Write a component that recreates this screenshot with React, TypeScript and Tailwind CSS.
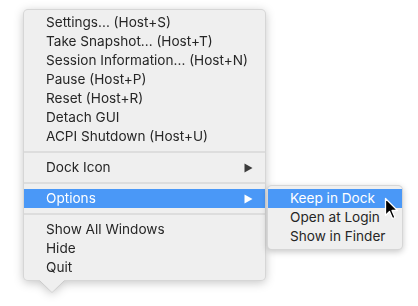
const topItems = [
  "Settings... (Host+S)",
  "Take Snapshot... (Host+T)",
  "Session Information... (Host+N)",
  "Pause (Host+P)",
  "Reset (Host+R)",
  "Detach GUI",
  "ACPI Shutdown (Host+U)",
];

const bottomItems = ["Show All Windows", "Hide", "Quit"];

const subItems = ["Keep in Dock", "Open at Login", "Show in Finder"];

function Arrow({ white }: { white?: boolean }) {
  return (
    <svg width="9" height="10" viewBox="0 0 9 10" className="mr-[12px]">
      <path d="M0.5 0.5 L8.5 5 L0.5 9.5 Z" fill={white ? "#ffffff" : "#3b3b3b"} />
    </svg>
  );
}

function Separator() {
  return (
    <div className="py-[5px]">
      <div className="h-[2px] bg-[#dddddd]" />
    </div>
  );
}

function Row({ label, active, arrow }: { label: string; active?: boolean; arrow?: boolean }) {
  return (
    <div
      className={
        active
          ? "flex h-[19px] items-center justify-between bg-[#4a98f7] pl-[22px] text-white"
          : "flex h-[19px] items-center justify-between pl-[22px] text-[#262626]"
      }
    >
      <span>{label}</span>
      {arrow && <Arrow white={active} />}
    </div>
  );
}

export default function App() {
  return (
    <div className="relative h-[306px] w-[418px] overflow-hidden bg-white text-[13.6px] leading-none font-['Inter','Liberation_Sans',sans-serif]">
      <div className="pl-[23px] pt-[9px]">
        <div className="relative w-[243px]">
          {/* main menu + tail */}
          <div className="relative drop-shadow-[0_2px_5px_rgba(0,0,0,0.22)]">
            <div className="rounded-[5px] border border-black/10 bg-[#efefef] py-[3px]">
              {topItems.map((t) => (
                <Row key={t} label={t} />
              ))}
              <Separator />
              <Row label="Dock Icon" arrow />
              <Separator />
              <Row label="Options" arrow active />
              <Separator />
              {bottomItems.map((t) => (
                <Row key={t} label={t} />
              ))}
            </div>
            <svg width="26" height="13" viewBox="0 0 26 13" className="absolute left-[16px] top-full -mt-[1px]">
              <path d="M0 0 L13 12.5 L26 0 Z" fill="#efefef" />
              <path d="M0.5 0.5 L13 12.5 L25.5 0.5" fill="none" stroke="rgba(0,0,0,0.1)" strokeWidth="1" />
            </svg>
          </div>

          {/* submenu */}
          <div className="absolute left-[244px] top-[176px] w-[136px] rounded-[5px] border border-black/10 bg-[#efefef] py-[3px] shadow-[0_2px_6px_rgba(0,0,0,0.22)]">
            {subItems.map((t, i) => (
              <Row key={t} label={t} active={i === 0} />
            ))}
          </div>
        </div>
      </div>

      {/* mouse pointer */}
      <svg width="16" height="24" viewBox="0 0 16 24" className="absolute left-[384px] top-[197px]">
        <path
          d="M1.5 1.5 L1.5 18.5 L5.5 14.5 L8.5 21.5 L11 20.5 L8 13.5 L13.5 13.5 Z"
          fill="#000000"
          stroke="#ffffff"
          strokeWidth="1.3"
          strokeLinejoin="round"
        />
      </svg>
    </div>
  );
}
